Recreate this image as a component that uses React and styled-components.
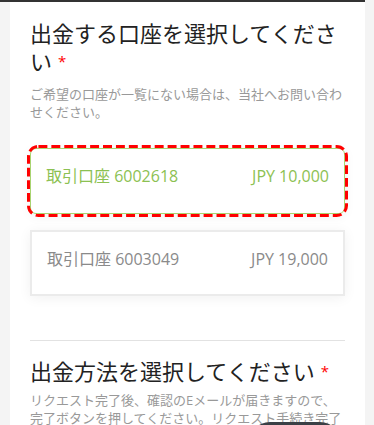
import React, { useState } from 'react'
import styled, { createGlobalStyle } from 'styled-components'

const GlobalStyle = createGlobalStyle`
  html, body {
    margin: 0;
    padding: 0;
    background: #f4f4f4;
    font-family: "Open Sans", "Noto Sans CJK JP", sans-serif;
    overflow: hidden;
  }
  * { box-sizing: border-box; }
`

const Page = styled.div`
  width: 365px;
  border-top: 2px solid #333;
  padding-left: 10px;
  background: #f4f4f4;
`

const Panel = styled.main`
  background: #fff;
  padding: 17px 20px 40px;
`

const Section = styled.section`
  display: flex;
  flex-direction: column;
`

const Heading = styled.h2`
  margin: 0;
  font-size: 22px;
  line-height: 28px;
  font-weight: 400;
  color: #222;
`

const Required = styled.span`
  color: #f00;
  font-size: 15px;
  vertical-align: top;
  margin-left: 6px;
`

const Note = styled.p`
  margin: ${p => p.$gap}px 0 0;
  font-size: 13px;
  line-height: 18px;
  color: #999;
`

const AccountList = styled.div`
  display: flex;
  flex-direction: column;
  gap: 16px;
  margin-top: 27px;
`

const AccountCard = styled.button`
  position: relative;
  display: flex;
  justify-content: space-between;
  align-items: flex-start;
  height: 66px;
  padding: 16px 15px 0;
  font-family: inherit;
  font-size: 16px;
  line-height: 22px;
  text-align: left;
  background: #fff;
  cursor: pointer;
  border-radius: ${p => (p.$active ? '6px' : '0')};
  border: ${p => (p.$active ? '1px solid #a9d470' : '2px solid #ebebeb')};
  color: ${p => (p.$active ? '#8cc152' : '#8a8a8a')};
  box-shadow: 0 2px 12px rgba(0, 0, 0, 0.06);
  outline: none;
`

const FocusRing = styled.svg`
  position: absolute;
  left: -4px;
  top: -4px;
  width: calc(100% + 8px);
  height: calc(100% + 8px);
  overflow: visible;
  pointer-events: none;
`

const Divider = styled.hr`
  margin: 44px 0 16px;
  border: none;
  border-top: 1px solid #e2e2e2;
`

const ChatButton = styled.div`
  position: fixed;
  right: 32px;
  bottom: -41px;
  width: 94px;
  height: 44px;
  border-radius: 22px;
  background: #3b4046;
`

const accounts = [
  { id: '6002618', balance: 'JPY 10,000' },
  { id: '6003049', balance: 'JPY 19,000' },
]

export default function App() {
  const [selected, setSelected] = useState('6002618')

  return (
    <>
      <GlobalStyle />
      <Page>
        <Panel>
          <Section>
            <Heading>
              出金する口座を選択してください<Required>*</Required>
            </Heading>
            <Note $gap={10}>ご希望の口座が一覧にない場合は、当社へお問い合わせください。</Note>
            <AccountList>
              {accounts.map(a => (
                <AccountCard
                  key={a.id}
                  $active={selected === a.id}
                  onClick={() => setSelected(a.id)}
                >
                  <span>取引口座 {a.id}</span>
                  <span>{a.balance}</span>
                  {selected === a.id && (
                    <FocusRing viewBox="0 0 323 74" preserveAspectRatio="none">
                      <rect
                        x="1.5"
                        y="1.5"
                        width="320"
                        height="71"
                        rx="10"
                        fill="none"
                        stroke="#f00"
                        strokeWidth="3"
                        strokeDasharray="9 4"
                      />
                    </FocusRing>
                  )}
                </AccountCard>
              ))}
            </AccountList>
          </Section>
          <Divider />
          <Section>
            <Heading>
              出金方法を選択してください<Required>*</Required>
            </Heading>
            <Note $gap={6}>
              リクエスト完了後、確認のEメールが届きますので、完了ボタンを押してください。リクエスト手続き完了後、出金処理を開始いたします。
            </Note>
          </Section>
        </Panel>
      </Page>
      <ChatButton />
    </>
  )
}
